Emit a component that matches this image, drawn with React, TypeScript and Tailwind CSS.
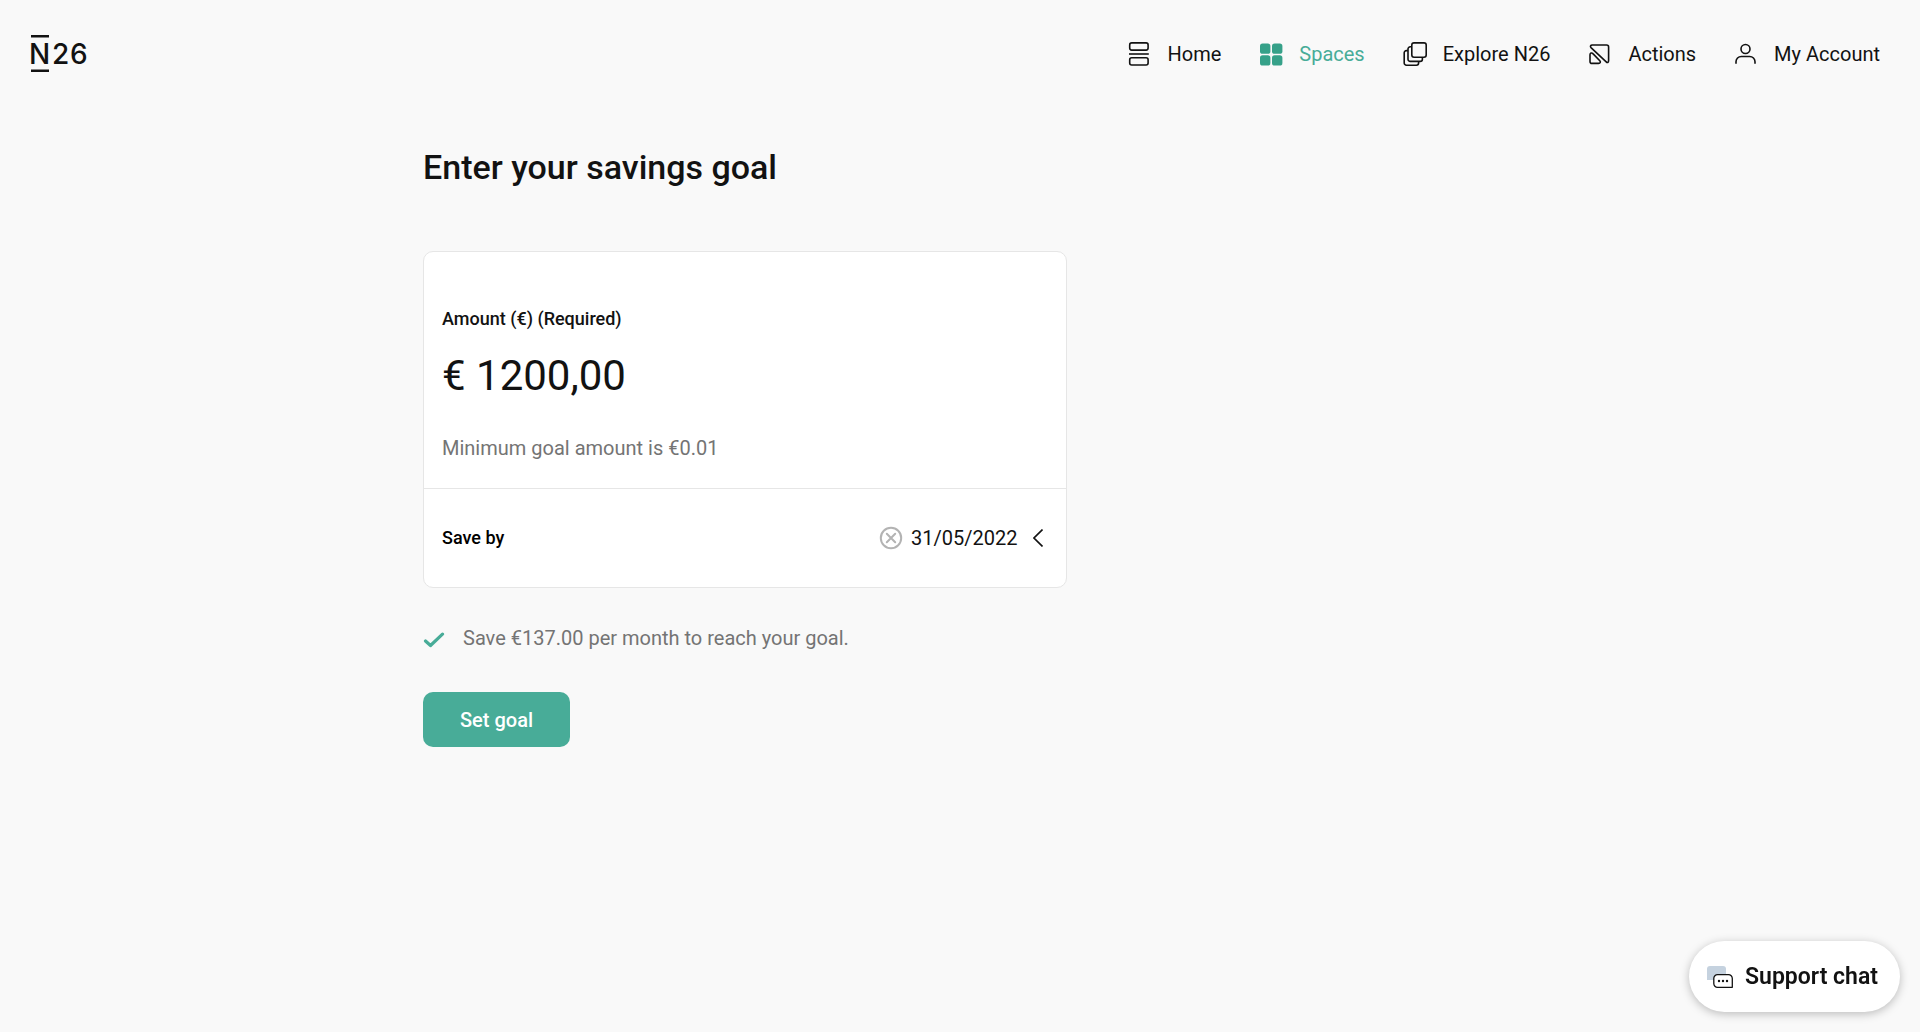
import { useState, type ReactNode } from "react";

function Icon({ children }: { children: ReactNode }) {
  return (
    <svg
      viewBox="0 0 24 24"
      className="size-6 shrink-0"
      fill="none"
      stroke="currentColor"
      strokeWidth="1.6"
      strokeLinejoin="round"
      aria-hidden="true"
    >
      {children}
    </svg>
  );
}

const navItems = [
  {
    label: "Home",
    icon: (
      <Icon>
        <rect x="2.7" y="0.9" width="18.4" height="7.2" rx="2" />
        <path d="M2 12h19.8" />
        <rect x="2.7" y="15.8" width="18.4" height="7.2" rx="2" />
      </Icon>
    ),
  },
  {
    label: "Spaces",
    active: true,
    icon: (
      <Icon>
        <g fill="#36a189" stroke="none">
          <rect x="1" y="1.4" width="10.4" height="10.4" rx="2.6" />
          <rect x="13" y="1.4" width="10.4" height="10.4" rx="2.6" />
          <rect x="1" y="13.2" width="10.4" height="10.4" rx="2.6" />
          <rect x="13" y="13.2" width="10.4" height="10.4" rx="2.6" />
        </g>
      </Icon>
    ),
  },
  {
    label: "Explore N26",
    icon: (
      <Icon>
        <rect x="8.8" y="0.9" width="14.4" height="14.4" rx="2.2" />
        <path d="M8.4 4.800H7.200A2.200 2.200 0 0 0 5 7v10.200a2.200 2.200 0 0 0 2.200 2.200h10a2.200 2.200 0 0 0 2.200-2.200v-1.400" />
        <path d="M4.800 8.600H3.400a2.200 2.200 0 0 0-2.200 2.200v10.200a2.200 2.200 0 0 0 2.200 2.200h10a2.200 2.200 0 0 0 2.200-2.200v-1.400" />
      </Icon>
    ),
  },
  {
    label: "Actions",
    icon: (
      <Icon>
        <path d="M4.200 3h14.400a2 2 0 0 1 2 2v13.800c0 1.700-1.300 2.200-2.400 1.100L3 5.600C1.900 4.500 2.600 3 4.200 3z" />
        <path d="M2 12.800v6.600a2 2 0 0 0 2 2h6.600c1.700 0 2.300-1.500 1.200-2.700l-6.900-7.100c-1.100-1.200-2.900-.5-2.900 1.200z" />
      </Icon>
    ),
  },
  {
    label: "My Account",
    icon: (
      <Icon>
        <circle cx="11.500" cy="7" r="4.500" />
        <path d="M2 21.700v-1.900a5.300 5.300 0 0 1 5.300-5.300h8.400a5.300 5.300 0 0 1 5.300 5.300v1.900" />
      </Icon>
    ),
  },
];

function Logo() {
  return (
    <a href="#home" aria-label="N26" className="block">
      <svg viewBox="0 0 60 38" className="h-[38px] w-[60px] overflow-visible" fill="#121212" aria-hidden="true">
        <rect x="0" y="0" width="18" height="2.500" />
        <text x="-2" y="28.500" fontFamily="Inter, sans-serif" fontSize="28" fontWeight="500">
          N
        </text>
        <text x="21" y="28.500" fontFamily="Inter, sans-serif" fontSize="28" fontWeight="500">
          2
        </text>
        <text x="39" y="28.500" fontFamily="Inter, sans-serif" fontSize="28" fontWeight="500">
          6
        </text>
        <rect x="0" y="34.500" width="18" height="2.500" />
      </svg>
    </a>
  );
}

function Header() {
  return (
    <header className="flex items-center justify-between pt-[35px] pr-10 pb-[34px] pl-[31px]">
      <Logo />
      <nav aria-label="Main">
        <ul className="flex items-center gap-[38px]">
          {navItems.map((item) => (
            <li key={item.label}>
              <a
                href="#"
                aria-current={item.active ? "page" : undefined}
                className={
                  item.active
                    ? "flex items-center gap-4 text-xl text-[#48ac98]"
                    : "flex items-center gap-4 text-xl text-[#121212]"
                }
              >
                {item.icon}
                <span>{item.label}</span>
              </a>
            </li>
          ))}
        </ul>
      </nav>
    </header>
  );
}

export default function App() {
  const [amount, setAmount] = useState("€ 1200,00");
  const [date, setDate] = useState("31/05/2022");

  return (
    <div className="min-h-screen bg-[#f9f9f9] font-['Roboto',sans-serif] text-[#121212]">
      <Header />

      <main className="mx-auto max-w-[1074px] pt-10">
        <h1 className="text-[34px] leading-10 font-medium">Enter your savings goal</h1>

        <form className="mt-16" onSubmit={(e) => e.preventDefault()}>
          <div className="w-3/5 rounded-[10px] border border-[#e6e6e6] bg-white">
            <div className="flex flex-col border-b border-[#e6e6e6] px-[18px] pt-[53px] pb-[26px]">
              <label htmlFor="amount" className="text-lg leading-7 font-medium">
                Amount (€) (Required)
              </label>
              <input
                id="amount"
                type="text"
                inputMode="decimal"
                aria-describedby="amount-hint"
                className="mt-[18px] h-12 w-full bg-transparent text-[42px] outline-none"
                value={amount}
                onChange={(e) => setAmount(e.target.value)}
              />
              <p id="amount-hint" className="mt-[35px] text-xl leading-7 text-[#747474]">
                Minimum goal amount is €0.01
              </p>
            </div>
            <div className="flex items-center justify-between py-[35px] pr-[23px] pl-[18px]">
              <span className="text-lg leading-7 font-medium text-black">Save by</span>
              <div className="flex items-center">
                <button type="button" aria-label="Clear date" onClick={() => setDate("")}>
                  <svg
                    viewBox="0 0 24 24"
                    className="size-6"
                    fill="none"
                    stroke="#b3b3b3"
                    strokeWidth="2"
                    strokeLinecap="round"
                    aria-hidden="true"
                  >
                    <circle cx="12" cy="12" r="10.200" />
                    <path d="m7.800 7.800 8.400 8.400m0-8.400-8.400 8.400" />
                  </svg>
                </button>
                <button type="button" className="ml-2 flex items-center gap-4 text-xl leading-7">
                  {date}
                  <svg
                    viewBox="0 0 10 18"
                    className="h-[18px] w-2.5"
                    fill="none"
                    stroke="currentColor"
                    strokeWidth="1.600"
                    aria-hidden="true"
                  >
                    <path d="M9.500 0.500 1 9l8.500 8.500" />
                  </svg>
                </button>
              </div>
            </div>
          </div>

          <p className="mt-9 flex items-center gap-[18px] text-xl leading-7 text-[#747474]">
            <svg
              viewBox="0 0 22 16"
              className="mt-1 h-4 w-[22px]"
              fill="none"
              stroke="#48ac98"
              strokeWidth="3.200"
              strokeLinecap="round"
              strokeLinejoin="round"
              aria-hidden="true"
            >
              <path d="M2.500 9 7.500 13.500 19.500 2.200" />
            </svg>
            Save €137.00 per month to reach your goal.
          </p>

          <button
            type="submit"
            className="mt-10 h-[55px] rounded-[10px] bg-[#48ac98] px-[37px] text-xl font-medium text-white"
          >
            Set goal
          </button>
        </form>
      </main>

      <button
        type="button"
        className="fixed right-5 bottom-5 flex h-[71px] items-center gap-3 rounded-full bg-white pr-[22px] pl-[18px] text-[23px] font-semibold shadow-[0_2px_10px_rgba(0,0,0,0.25)]"
      >
        <svg viewBox="0 0 26 22" className="h-[22px] w-[26px]" aria-hidden="true">
          <path fill="#c5d2df" d="M3 0h13a3 3 0 0 1 3 3v11H0V3a3 3 0 0 1 3-3z" />
          <path
            fill="#fff"
            stroke="#121212"
            strokeWidth="1.300"
            strokeLinejoin="round"
            d="M10.500 8.600h11a3.800 3.800 0 0 1 3.800 3.800v8.900H10.500A3.700 3.700 0 0 1 6.800 17.600V12.300A3.700 3.700 0 0 1 10.500 8.600z"
          />
          <g fill="#121212">
            <circle cx="12" cy="15" r="1.200" />
            <circle cx="16" cy="15" r="1.200" />
            <circle cx="20" cy="15" r="1.200" />
          </g>
        </svg>
        <span className="pt-0.5">Support chat</span>
      </button>
    </div>
  );
}
